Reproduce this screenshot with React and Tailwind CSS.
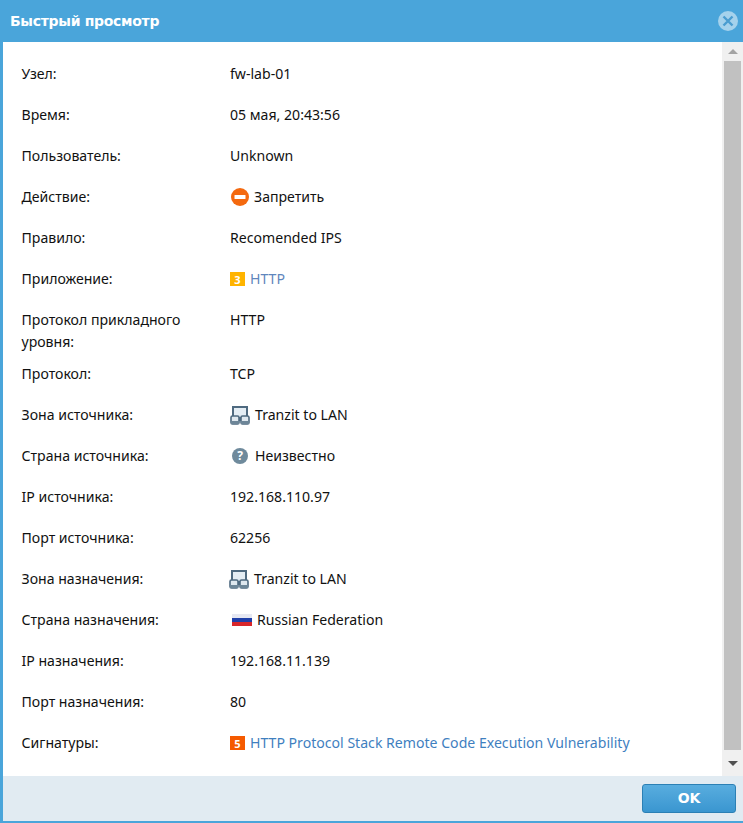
const DisplayIcon = () => (
  <svg width="20" height="19" viewBox="0 0 20 19" className="block shrink-0">
    <rect x="3" y="1" width="14" height="11" fill="#e4edf4" stroke="#4f6a80" strokeWidth="2" />
    <rect x="1" y="10" width="8" height="8" rx="1.500" fill="#dfe8ef" stroke="#4f6a80" strokeWidth="1.600" />
    <rect x="11" y="10" width="8" height="8" rx="1.500" fill="#dfe8ef" stroke="#4f6a80" strokeWidth="1.600" />
    <rect x="1" y="15" width="8" height="3" fill="#6d8698" />
    <rect x="11" y="15" width="8" height="3" fill="#6d8698" />
    <rect x="9" y="13" width="2" height="2" fill="#4f6a80" />
  </svg>
);

const Row = ({ label, children, tall }) => (
  <div className={`flex pt-[10px] leading-[22px] ${tall ? "h-[54px]" : "h-[41px]"}`}>
    <div className="w-[208.500px] shrink-0 pr-[10px]">{label}</div>
    <div className="flex items-center h-[22px] whitespace-nowrap">{children}</div>
  </div>
);

const Badge = ({ n, bg }) => (
  <span className={`w-[15px] h-[14px] mr-[5px] flex items-center justify-center text-white text-[11px] font-bold leading-none ${bg}`}>{n}</span>
);

export default function App() {
  return (
    <div className="w-[743px] h-[823px] flex flex-col bg-[#4aa5da] overflow-hidden text-[14.100px] text-[#111] font-['Noto_Sans','Liberation_Sans',sans-serif]">
      <div className="h-[42px] shrink-0 flex items-center justify-between pl-[10px] pr-[5px]">
        <span className="text-white font-bold text-[14px] font-['DejaVu_Sans',sans-serif] tracking-[-0.300px]">Быстрый просмотр</span>
        <svg width="20" height="20" viewBox="0 0 20 20">
          <circle cx="10" cy="10" r="10" fill="#a5d2ec" />
          <path d="M5.500 5.500l9 9M14.500 5.500l-9 9" stroke="#4a9dd0" strokeWidth="2.400" />
        </svg>
      </div>
      <div className="flex-1 ml-[3px] flex min-h-0">
        <div className="flex-1 bg-white pl-[18.500px] pt-[11px]">
          <Row label="Узел:">fw-lab-01</Row>
          <Row label="Время:">05 мая, 20:43:56</Row>
          <Row label="Пользователь:">Unknown</Row>
          <Row label="Действие:">
            <svg width="18" height="18" viewBox="0 0 18 18" className="ml-[1px] mr-[5px]">
              <circle cx="9" cy="9" r="9" fill="#f4690f" />
              <rect x="3.500" y="7" width="11" height="4" rx="0.500" fill="#fff" />
            </svg>
            Запретить
          </Row>
          <Row label="Правило:">Recomended IPS</Row>
          <Row label="Приложение:">
            <Badge n="3" bg="bg-[#ffb400]" />
            <span className="text-[#5f86bd]">HTTP</span>
          </Row>
          <Row tall label="Протокол прикладного уровня:">HTTP</Row>
          <Row label="Протокол:">TCP</Row>
          <Row label="Зона источника:">
            <span className="mr-[5px]"><DisplayIcon /></span>
            Tranzit to LAN
          </Row>
          <Row label="Страна источника:">
            <span className="ml-[2px] mr-[7px] w-[16px] h-[16px] rounded-full bg-[#6f8a9c] text-white text-[12px] font-bold flex items-center justify-center">?</span>
            Неизвестно
          </Row>
          <Row label="IP источника:">192.168.110.97</Row>
          <Row label="Порт источника:">62256</Row>
          <Row label="Зона назначения:">
            <span className="-ml-[1px] mr-[5px]"><DisplayIcon /></span>
            Tranzit to LAN
          </Row>
          <Row label="Страна назначения:">
            <span className="ml-[2px] mr-[5px] w-[20px] h-[12px] flex flex-col">
              <span className="h-[4px] bg-[#e6e8f2]" />
              <span className="h-[4px] bg-[#1f3fa8]" />
              <span className="h-[4px] bg-[#d8262a]" />
            </span>
            Russian Federation
          </Row>
          <Row label="IP назначения:">192.168.11.139</Row>
          <Row label="Порт назначения:">80</Row>
          <Row label="Сигнатуры:">
            <Badge n="5" bg="bg-[#f55a00]" />
            <span className="text-[#3f7fbf]">HTTP Protocol Stack Remote Code Execution Vulnerability</span>
          </Row>
        </div>
        <div className="w-[21px] shrink-0 bg-[#f0f0f0] flex flex-col items-center">
          <div className="h-[19px] flex items-center justify-center">
            <div className="w-0 h-0 border-x-[5px] border-x-transparent border-b-[5px] border-b-[#a3a3a3]" />
          </div>
          <div className="w-[17px] flex-1 bg-[#c1c1c1]" />
          <div className="h-[26px] flex items-center justify-center">
            <div className="w-0 h-0 border-x-[5px] border-x-transparent border-t-[5px] border-t-[#505050]" />
          </div>
        </div>
      </div>
      <div className="h-[45px] shrink-0 ml-[3px] mb-[2px] bg-[#e1ebf2] flex items-start justify-end pt-[8px] pr-[7px]">
        <button className="w-[94px] h-[29px] rounded-[3px] border border-[#2b80b5] bg-gradient-to-b from-[#58addf] to-[#3a96d0] text-white font-bold text-[14px] font-['DejaVu_Sans',sans-serif]">OK</button>
      </div>
    </div>
  );
}
